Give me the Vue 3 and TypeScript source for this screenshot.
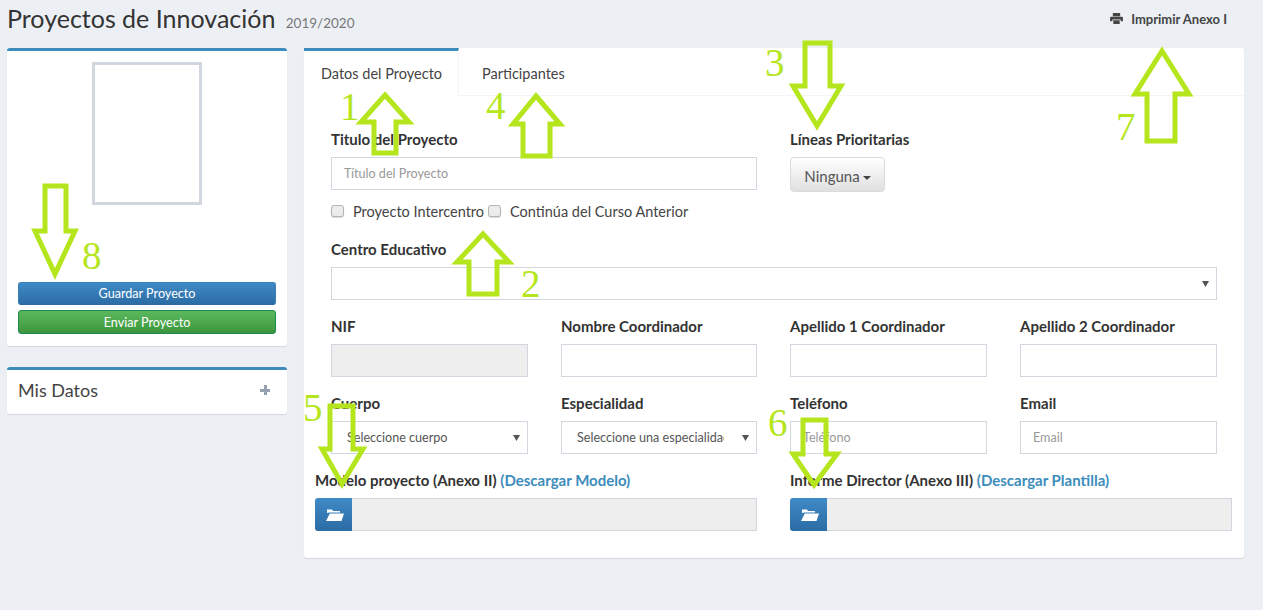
<template>
  <div class="page">
    <header class="top">
      <h1>Proyectos de Innovación <small>2019/2020</small></h1>
      <a class="print">
        <svg width="13" height="11" viewBox="0 0 14 12"><path d="M3 0h8v3.5H3zM1 4h12a1 1 0 0 1 1 1v4h-2.5V7h-9v2H0V5a1 1 0 0 1 1-1zM3.5 8h7v4h-7z" fill="#444" /></svg>
        Imprimir Anexo I
      </a>
    </header>

    <div class="main">
      <aside class="side">
        <section class="box photo-box">
          <div class="photo"></div>
          <button class="btn blue">Guardar Proyecto</button>
          <button class="btn green">Enviar Proyecto</button>
        </section>
        <section class="box data-box">
          <span>Mis Datos</span>
          <b class="plus"></b>
        </section>
      </aside>

      <section class="card">
        <nav class="tabs">
          <a v-for="(tab, i) in tabs" :key="tab" :class="{ active: i === 0 }">{{ tab }}</a>
        </nav>

        <form class="form" @submit.prevent>
          <div class="row two">
            <div>
              <label>Titulo del Proyecto</label>
              <input type="text" placeholder="Título del Proyecto">
              <div class="checks">
                <span v-for="c in checks" :key="c"><input type="checkbox">{{ c }}</span>
              </div>
            </div>
            <div>
              <label>Líneas Prioritarias</label>
              <button class="drop" type="button">Ninguna<i></i></button>
            </div>
          </div>

          <div class="row centro">
            <label>Centro Educativo</label>
            <select></select>
          </div>

          <div class="row four">
            <div><label>NIF</label><input type="text" disabled></div>
            <div><label>Nombre Coordinador</label><input type="text"></div>
            <div><label>Apellido 1 Coordinador</label><input type="text"></div>
            <div><label>Apellido 2 Coordinador</label><input type="text"></div>
          </div>

          <div class="row four">
            <div><label>Cuerpo</label><select><option>Seleccione cuerpo</option></select></div>
            <div><label>Especialidad</label><select><option>Seleccione una especialidad</option></select></div>
            <div><label>Teléfono</label><input type="text" placeholder="Teléfono"></div>
            <div><label>Email</label><input type="text" placeholder="Email"></div>
          </div>

          <div class="row files">
            <div v-for="f in files" :key="f.label">
              <label>{{ f.label }} <a>({{ f.link }})</a></label>
              <div class="file">
                <span class="file-btn">
                  <svg width="18" height="13" viewBox="0 0 18 13"><path d="M1 5V1.5h5l1 1.5h7v1.5H3.5zM3.8 5.4H18L15.5 13H0z" fill="#fff" /></svg>
                </span>
                <span class="file-name"></span>
              </div>
            </div>
          </div>
        </form>
      </section>
    </div>

    <!-- flechas y numeros pintados encima de la captura -->
    <svg class="marks" width="1263" height="610" viewBox="0 0 1263 610">
      <polygon v-for="(a, i) in arrows" :key="i" :points="a" />
      <text v-for="n in numbers" :key="n.t" :x="n.x" :y="n.y">{{ n.t }}</text>
    </svg>
  </div>
</template>

<script setup lang="ts">
const tabs: string[] = ['Datos del Proyecto', 'Participantes']
const checks: string[] = ['Proyecto Intercentro', 'Continúa del Curso Anterior']

const files = [
  { label: 'Modelo proyecto (Anexo II)', link: 'Descargar Modelo' },
  { label: 'Informe Director (Anexo III)', link: 'Descargar Plantilla' }
]

// x1,x2 = fuste, wl,wr = alas, wy = altura alas, tip = punta, end = extremo
const arrow = (x1: number, x2: number, wl: number, wr: number, wy: number, tx: number, ty: number, end: number): string =>
  `${tx},${ty} ${wr},${wy} ${x2},${wy} ${x2},${end} ${x1},${end} ${x1},${wy} ${wl},${wy}`

const arrows: string[] = [
  arrow(374, 396, 361, 409, 122, 385, 95, 153),
  arrow(469, 497, 457, 509, 262, 483, 234, 294),
  arrow(805, 830, 793, 841, 86, 817, 126, 43),
  arrow(523, 550, 513, 560, 124, 536, 96, 156),
  arrow(330, 353, 322, 363, 449, 342, 484, 406),
  arrow(803, 826, 793, 837, 454, 814, 485, 420),
  arrow(1147, 1175, 1135, 1189, 94, 1162, 51, 141),
  arrow(45, 66, 35, 75, 231, 55, 274, 186)
]

const numbers = [
  { t: '1', x: 340, y: 120 },
  { t: '2', x: 521, y: 297 },
  { t: '3', x: 765, y: 76 },
  { t: '4', x: 486, y: 119 },
  { t: '5', x: 303, y: 421 },
  { t: '6', x: 768, y: 436 },
  { t: '7', x: 1116, y: 140 },
  { t: '8', x: 82, y: 269 }
]
</script>

<style>
html, body {
  background: #ecf0f5;
  overflow: hidden;
}
</style>

<style scoped>
.page {
  position: relative;
  height: 610px;
  padding-left: 7px;
  box-sizing: border-box;
  font-family: Lato, "Noto Sans", sans-serif;
  font-size: 14.5px;
  color: #333;
}

.top {
  display: flex;
  justify-content: space-between;
  height: 48px;
  padding-right: 36px;
}

h1 {
  margin: 3px 0 0;
  font-size: 25px;
  font-weight: 400;
  line-height: 30px;
}

h1 small {
  margin-left: 4px;
  font-size: 13.5px;
  color: #777;
}

.print {
  display: flex;
  align-items: center;
  gap: 8px;
  height: 37px;
  font-size: 13px;
  font-weight: 700;
  color: #444;
}

.main {
  display: flex;
  gap: 17px;
  align-items: flex-start;
}

.side {
  display: flex;
  flex-direction: column;
  gap: 21px;
  width: 280px;
}

.box,
.card {
  background: #fff;
  border-radius: 3px;
  box-shadow: 0 1px 1px rgba(0, 0, 0, 0.1);
}

.box {
  border-top: 3px solid #3c8dbc;
}

.photo-box {
  display: flex;
  flex-direction: column;
  align-items: center;
  padding: 11px 11px 12px;
  height: 298px;
  box-sizing: border-box;
}

.photo {
  width: 110px;
  height: 143px;
  box-sizing: border-box;
  border: 3px solid #d2d6de;
  margin-bottom: 77px;
}

.btn {
  width: 100%;
  height: 23px;
  padding: 0;
  border: 1px solid;
  border-radius: 3px;
  font: 12.6px Lato, "Noto Sans", sans-serif;
  color: #fff;
}

.blue {
  background: linear-gradient(#3f8ac6, #2c6ca5);
  border-color: #3a80b8 #3a80b8 #2b699f;
}

.green {
  height: 24px;
  margin-top: 5px;
  background: linear-gradient(#5cb85c, #3c963f);
  border-color: #1f8a50;
}

.data-box {
  display: flex;
  justify-content: space-between;
  align-items: center;
  height: 47px;
  box-sizing: border-box;
  padding: 0 17px 4px 11px;
  font-size: 18px;
  color: #444;
}

.plus {
  position: relative;
  width: 10px;
  height: 10px;
  background: linear-gradient(#97a0b3, #97a0b3) center / 10px 3px no-repeat,
    linear-gradient(#97a0b3, #97a0b3) center / 3px 10px no-repeat;
}

.card {
  width: 940px;
  height: 510px;
}

.tabs {
  display: flex;
  height: 48px;
  box-sizing: border-box;
  border-bottom: 1px solid #f4f4f4;
}

.tabs a {
  padding: 3px 15px 0 23px;
  line-height: 45px;
  color: #444;
}

.tabs a.active {
  margin-bottom: -1px;
  padding: 0 16px 0 17px;
  background: #fff;
  border-top: 3px solid #3c8dbc;
  border-right: 1px solid #f4f4f4;
  line-height: 46px;
}

.form {
  padding: 34px 27px 0;
}

label {
  display: block;
  height: 20px;
  margin-bottom: 7px;
  line-height: 18px;
  font-size: 15px;
  font-weight: 700;
  color: #333;
}

label a {
  color: #3c8dbc;
}

input[type="text"],
select {
  display: block;
  width: 100%;
  height: 33px;
  box-sizing: border-box;
  padding: 0 12px;
  border: 1px solid #d2d6de;
  border-radius: 0;
  background-color: #fff;
  font: 12.6px Lato, "Noto Sans", sans-serif;
  color: #555;
}

select {
  appearance: none;
  padding: 0 32px 0 15px;
  background-image: url("data:image/svg+xml,%3Csvg xmlns='http://www.w3.org/2000/svg' width='7' height='6'%3E%3Cpath d='M0 0h7L3.5 6z' fill='%23555'/%3E%3C/svg%3E");
  background-repeat: no-repeat;
  background-position: right 7px center;
}

input::placeholder {
  color: #999;
}

input:disabled {
  background: #eee;
}

.row {
  display: grid;
  column-gap: 33px;
  margin-bottom: 17px;
}

.two {
  grid-template-columns: 426px 1fr;
  margin-bottom: 18px;
}

.centro {
  display: block;
}

.four {
  grid-template-columns: 197px 196px 197px 197px;
}

.files {
  grid-template-columns: 442px 442px;
  margin-left: -16px;
  margin-right: -15px;
}

.checks {
  display: flex;
  height: 20px;
  margin-top: 12px;
  align-items: center;
  color: #444;
}

.checks input {
  appearance: none;
  width: 13px;
  height: 12px;
  margin: 0 9px 0 0;
  border: 1px solid #b4b4b4;
  border-radius: 3px;
  background: #ececec;
  box-shadow: 0 1px 1px rgba(0, 0, 0, 0.15);
}

.checks span {
  display: flex;
  align-items: center;
  margin-top: -2px;
}

.checks span + span input {
  margin-left: 4px;
}

.drop {
  display: block;
  width: 95px;
  height: 35px;
  padding: 2px 0 0;
  border: 1px solid #dbdbdb;
  border-radius: 4px;
  background: linear-gradient(#fff, #e0e0e0);
  font: 15px Lato, "Noto Sans", sans-serif;
  color: #555;
}

.drop i {
  display: inline-block;
  margin-left: 3px;
  vertical-align: middle;
  border-top: 4px solid #444;
  border-left: 4px solid transparent;
  border-right: 4px solid transparent;
}

.file {
  display: flex;
  height: 33px;
}

.file-btn {
  display: flex;
  align-items: center;
  justify-content: center;
  width: 37px;
  padding-left: 2px;
  box-sizing: border-box;
  border-radius: 3px 0 0 3px;
  background: linear-gradient(#3f8ac6, #2c6ca5);
}

.file-name {
  flex: 1;
  box-sizing: border-box;
  border: 1px solid #d2d6de;
  border-left: 0;
  background: #eee;
}

.marks {
  position: absolute;
  top: 0;
  left: 0;
  pointer-events: none;
}

.marks polygon {
  fill: none;
  stroke: #b5e61d;
  stroke-width: 5;
}

.marks text {
  font-family: "Liberation Serif", serif;
  font-size: 39px;
  fill: #b5e61d;
}
</style>
